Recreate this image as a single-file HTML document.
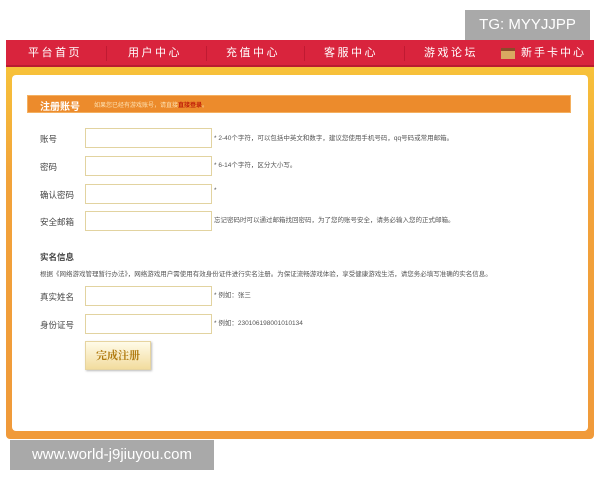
<!DOCTYPE html>
<html><head><meta charset="utf-8"><style>
*{margin:0;padding:0;box-sizing:border-box}
body{width:600px;height:480px;background:#fff;position:relative;overflow:hidden;font-family:"Liberation Sans","Noto Sans CJK SC",sans-serif}
.a{position:absolute}
.nav{left:6px;top:40px;width:588px;height:27px;background:#d9243d;border-bottom:2px solid #b81c30}
.nav span{position:absolute;top:7px;color:#fff;font-size:11px;letter-spacing:2.5px;white-space:nowrap;line-height:12px}
.sep{position:absolute;top:6px;width:1px;height:15px;background:#c01a32}
.frame{left:6px;top:67px;width:588px;height:372px;background:linear-gradient(#f7c23a,#f2a33a 30%,#f09a3a);border-radius:0 0 4px 4px}
.inner{left:12px;top:75px;width:576px;height:356px;background:#fff;border-radius:4px}
.hd{left:27px;top:95px;width:544px;height:18px;background:#ec8b2c;border:1px solid #f4b060}
.lbl{font-size:8.5px;color:#444;left:40px;white-space:nowrap}
.in{left:85px;width:127px;height:20px;border:1px solid #e2d3a0;background:#fff}
.tip{font-size:6.5px;color:#555;left:214px;white-space:nowrap}
</style></head><body>
<div class="a" style="left:465px;top:10px;width:125px;height:30px;background:#a9a9a9;color:#fff;font-size:15px;line-height:30px;text-align:center">TG: MYYJJPP</div>
<div class="a nav">
<span style="left:22px">平台首页</span><div class="sep" style="left:100px"></div>
<span style="left:122px">用户中心</span><div class="sep" style="left:200px"></div>
<span style="left:220px">充值中心</span><div class="sep" style="left:298px"></div>
<span style="left:318px">客服中心</span><div class="sep" style="left:398px"></div>
<span style="left:418px">游戏论坛</span>
<div style="position:absolute;left:495px;top:8px;width:14px;height:11px;background:#d9a860;border-top:3px solid #8a4a2a"></div>
<span style="left:515px;letter-spacing:2px">新手卡中心</span>
</div>
<div class="a frame"></div>
<div class="a inner"></div>
<div class="a hd"><span style="position:absolute;left:12px;top:2px;color:#fff;font-size:10px;font-weight:bold">注册账号</span><span style="position:absolute;left:66px;top:4px;color:#fde0b0;font-size:6px;white-space:nowrap">如果您已经有游戏账号，请直接<b style="color:#c0200a">直接登录</b>。</span></div>
<div class="a lbl" style="top:133px">账号</div><div class="a in" style="top:128px"></div><div class="a tip" style="top:132px">* 2-40个字符，可以包括中英文和数字，建议您使用手机号码，qq号码或常用邮箱。</div>
<div class="a lbl" style="top:161px">密码</div><div class="a in" style="top:156px"></div><div class="a tip" style="top:159px">* 6-14个字符，区分大小写。</div>
<div class="a lbl" style="top:189px">确认密码</div><div class="a in" style="top:184px"></div><div class="a tip" style="top:187px">*</div>
<div class="a lbl" style="top:216px">安全邮箱</div><div class="a in" style="top:211px"></div><div class="a tip" style="top:214px">忘记密码时可以通过邮箱找回密码，为了您的账号安全，请务必输入您的正式邮箱。</div>
<div class="a lbl" style="top:251px;font-weight:bold">实名信息</div>
<div class="a tip" style="left:40px;top:268px">根据《网络游戏管理暂行办法》，网络游戏用户需使用有效身份证件进行实名注册。为保证流畅游戏体验，享受健康游戏生活，请您务必填写准确的实名信息。</div>
<div class="a lbl" style="top:291px">真实姓名</div><div class="a in" style="top:286px"></div><div class="a tip" style="top:289px">* 例如：张三</div>
<div class="a lbl" style="top:319px">身份证号</div><div class="a in" style="top:314px"></div><div class="a tip" style="top:317px">* 例如：230106198001010134</div>
<div class="a" style="left:85px;top:341px;width:66px;height:29px;background:linear-gradient(#fffbe8,#f2dc9e);border:1px solid #e6d4a0;box-shadow:1px 1px 2px #bbb;color:#b07a10;font-size:11px;font-weight:bold;text-align:center;line-height:27px;font-family:'Noto Serif CJK SC',serif">完成注册</div>
<div class="a" style="left:10px;top:440px;width:204px;height:30px;background:#a9a9a9;color:#fff;font-size:15px;line-height:30px;text-align:center">www.world-j9jiuyou.com</div>
</body></html>
